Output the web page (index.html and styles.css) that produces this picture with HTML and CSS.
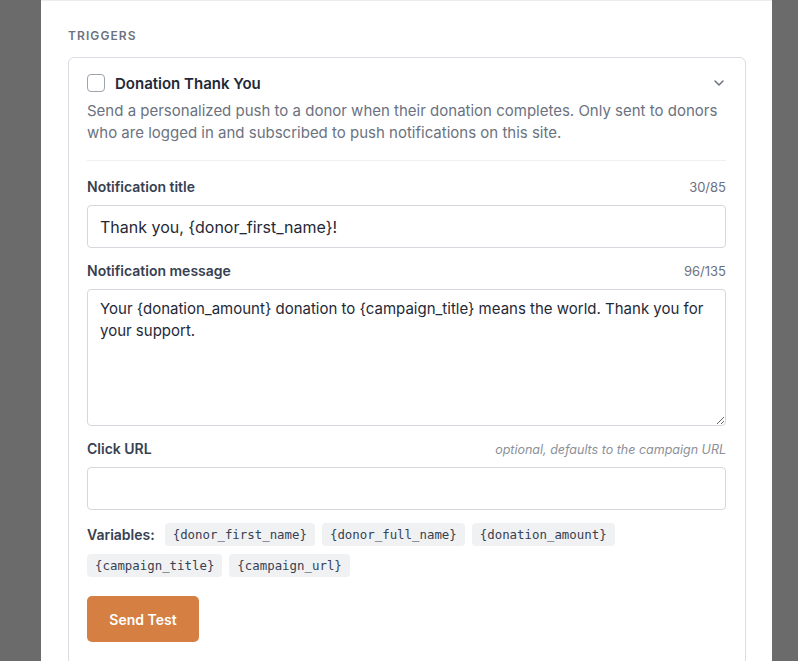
FILE: index.html
```html
<!DOCTYPE html>
<html lang="en">
<head>
<meta charset="utf-8">
<title>Triggers</title>
<link rel="stylesheet" href="styles.css">
</head>
<body>
<main class="panel">
  <h2 class="section-label">TRIGGERS</h2>
  <section class="trigger-card">
    <div class="trigger-head">
      <span class="checkbox"></span>
      <span class="trigger-title">Donation Thank You</span>
      <svg class="chevron" width="10" height="6" viewBox="0 0 10 6" aria-hidden="true">
        <path d="M1 1 L5 5 L9 1" fill="none" stroke="#6b7280" stroke-width="1.5" stroke-linecap="round" stroke-linejoin="round"/>
      </svg>
    </div>
    <p class="trigger-desc">Send a personalized push to a donor when their donation completes. Only sent to donors who are logged in and subscribed to push notifications on this site.</p>

    <div class="field">
      <div class="field-top">
        <label class="field-label">Notification title</label>
        <span class="counter">30/85</span>
      </div>
      <input class="text-input" type="text" value="Thank you, {donor_first_name}!">
    </div>

    <div class="field">
      <div class="field-top">
        <label class="field-label">Notification message</label>
        <span class="counter">96/135</span>
      </div>
      <textarea class="text-area">Your {donation_amount} donation to {campaign_title} means the world. Thank you for your support.</textarea>
    </div>

    <div class="field">
      <div class="field-top">
        <label class="field-label">Click URL</label>
        <span class="hint">optional, defaults to the campaign URL</span>
      </div>
      <input class="text-input" type="text" value="">
    </div>

    <div class="variables">
      <span class="variables-label">Variables:</span>
      <code class="chip">{donor_first_name}</code>
      <code class="chip">{donor_full_name}</code>
      <code class="chip">{donation_amount}</code>
      <code class="chip">{campaign_title}</code>
      <code class="chip">{campaign_url}</code>
    </div>

    <button class="send-btn" type="button">Send Test</button>
  </section>
</main>
</body>
</html>
```
FILE: styles.css
```css
html, body {
  margin: 0;
  height: 661px;
  overflow: hidden;
}

body {
  background: #6b6b6b;
  font-family: Inter, "Noto Sans", sans-serif;
  color: #1f2937;
}

.panel {
  margin-left: 41px;
  width: 731px;
  min-height: 900px;
  box-sizing: border-box;
  background: #ffffff;
  border-top: 1px solid #ececee;
  padding: 27px 26px 0 27px;
}

.section-label {
  margin: 0 0 13px;
  font-size: 12px;
  line-height: 16px;
  font-weight: 600;
  letter-spacing: 0.09em;
  color: #6b7280;
}

.trigger-card {
  border: 1px solid #d9dce1;
  border-radius: 6px;
  padding: 15px 19px 40px 18px;
}

.trigger-head {
  display: flex;
  align-items: center;
  height: 20px;
}

.checkbox {
  width: 16px;
  height: 16px;
  border: 1px solid #9ca3af;
  border-radius: 4px;
  background: #ffffff;
  margin-right: 10px;
  flex: none;
}

.trigger-title {
  font-size: 15px;
  font-weight: 600;
  color: #1f2937;
  flex: 1;
}

.chevron {
  margin-right: 2px;
}

.trigger-desc {
  margin: 7px 0 0;
  padding-bottom: 16px;
  border-bottom: 1px solid #eeeff1;
  font-size: 15px;
  line-height: 22px;
  color: #6b7280;
}

.field {
  margin-top: 13px;
}

.trigger-desc + .field {
  margin-top: 16px;
}

.field-top {
  display: flex;
  justify-content: space-between;
  align-items: baseline;
  height: 20px;
  margin-bottom: 8px;
}

.field-label {
  font-size: 14px;
  line-height: 20px;
  font-weight: 600;
  color: #374151;
}

.counter {
  font-size: 13px;
  color: #6b7280;
}

.hint {
  font-size: 12.5px;
  font-style: italic;
  color: #8b9099;
}

.text-input,
.text-area {
  display: block;
  width: 100%;
  box-sizing: border-box;
  border: 1px solid #d4d7dc;
  border-radius: 4px;
  font-family: Inter, "Noto Sans", sans-serif;
  color: #1f2937;
  background: #ffffff;
  margin: 0;
}

.text-input {
  height: 43px;
  padding: 0 12px;
  font-size: 16px;
}

.text-area {
  height: 137px;
  padding: 8px 12px;
  font-size: 15px;
  line-height: 22px;
  resize: vertical;
}

.variables {
  display: flex;
  flex-wrap: wrap;
  align-items: center;
  gap: 8px 7px;
  margin-top: 13px;
}

.variables-label {
  font-size: 14px;
  font-weight: 600;
  color: #374151;
  margin-right: 3px;
}

.chip {
  font-family: "DejaVu Sans Mono", "Liberation Mono", monospace;
  font-size: 12.4px;
  line-height: 23px;
  height: 23px;
  padding: 0 8px;
  background: #f0f1f3;
  border-radius: 4px;
  color: #374151;
}

.send-btn {
  display: block;
  margin-top: 19px;
  width: 112px;
  height: 46px;
  border: none;
  border-radius: 5px;
  background: #d57f42;
  color: #ffffff;
  font-family: Inter, "Noto Sans", sans-serif;
  font-size: 14px;
  font-weight: 600;
}
```
